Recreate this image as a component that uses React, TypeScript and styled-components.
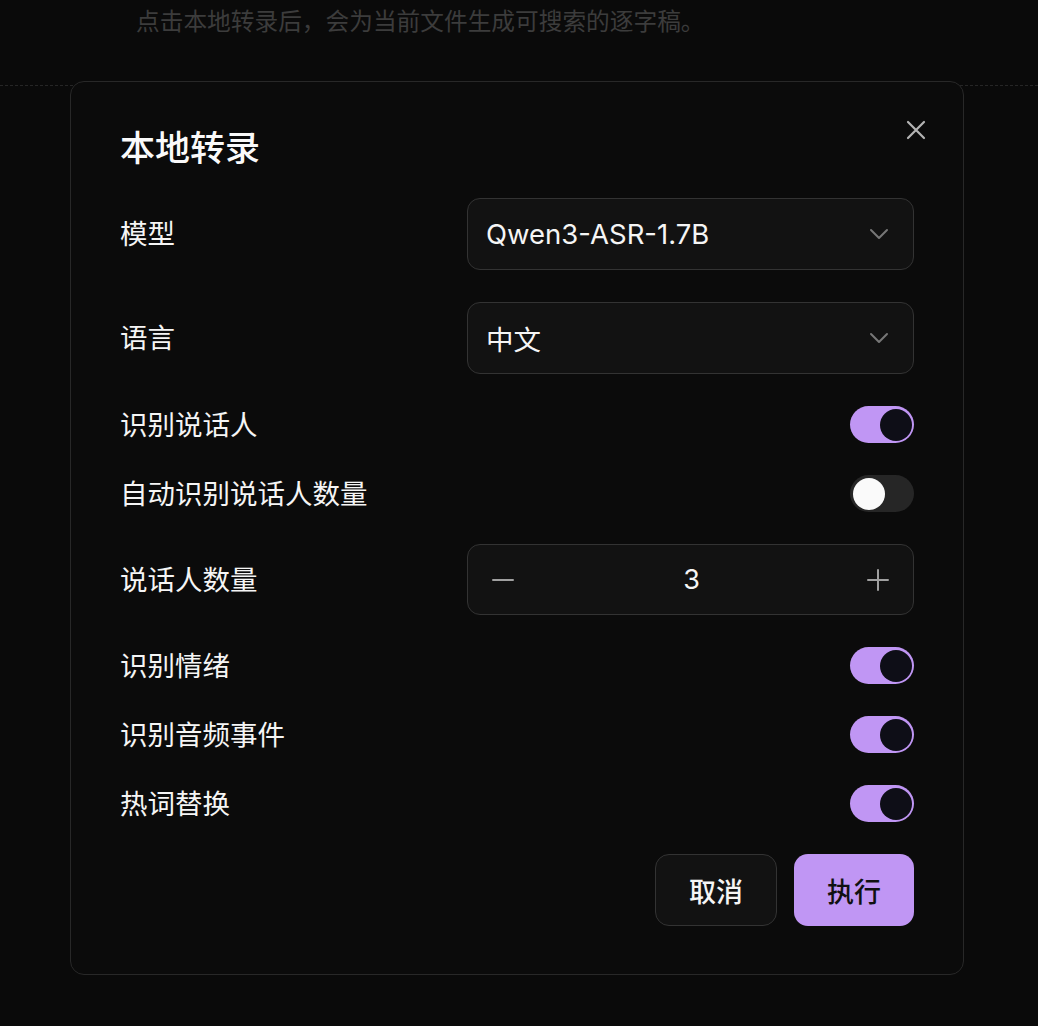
import React from "react";
import styled, { createGlobalStyle } from "styled-components";

const Global = createGlobalStyle`
  html, body { margin: 0; padding: 0; background: #0a0a0a; }
  body { font-family: Inter, "Noto Sans CJK SC", sans-serif; color: #f5f5f5; }
  * { box-sizing: border-box; }
`;

const Page = styled.div`
  position: relative;
  width: 1038px;
  height: 1026px;
  overflow: hidden;
  background: #0a0a0a;
`;

const Header = styled.div`
  height: 86px;
  padding: 8px 0 0 136px;
  border-bottom: 1px dashed #262626;
  font-size: 23.7px;
  line-height: 28px;
  color: #3c3c3c;
`;

const Dialog = styled.div`
  position: absolute;
  top: 81px;
  left: 70px;
  width: 894px;
  height: 894px;
  background: #0b0b0b;
  border: 1px solid #282828;
  border-radius: 14px;
  padding: 49px 49px 47px;
  display: flex;
  flex-direction: column;
  gap: 32px;
`;

const Title = styled.h2`
  margin: 0;
  font-size: 35px;
  line-height: 35px;
  font-weight: 500;
  color: #fafafa;
`;

const Close = styled.button`
  position: absolute;
  top: 36px;
  right: 35px;
  width: 24px;
  height: 24px;
  padding: 0;
  border: none;
  background: none;
  display: flex;
  align-items: center;
  justify-content: center;
`;

const Row = styled.div<{ $h: number }>`
  display: grid;
  grid-template-columns: 1fr 447px;
  align-items: center;
  height: ${(p) => p.$h}px;
`;

const Label = styled.div`
  font-size: 27.5px;
  line-height: 32px;
  color: #f5f5f5;
  font-weight: 400;
`;

const Field = styled.div<{ $h: number }>`
  height: ${(p) => p.$h}px;
  border: 1px solid #333333;
  border-radius: 13px;
  background: #121212;
  display: flex;
  align-items: center;
  justify-content: space-between;
  padding: 0 24px 0 18px;
  font-size: 27.5px;
  color: #f5f5f5;
`;

const Stepper = styled(Field)`
  padding: 0 24px 0 24px;
`;

const StepValue = styled.span`
  font-size: 27px;
  margin-left: 2px;
`;

const Track = styled.div<{ $on: boolean }>`
  justify-self: end;
  width: 64px;
  height: 37px;
  border-radius: 19px;
  background: ${(p) => (p.$on ? "#c096f4" : "#262626")};
  padding: 2.5px;
  display: flex;
  justify-content: ${(p) => (p.$on ? "flex-end" : "flex-start")};
`;

const Knob = styled.div<{ $on: boolean }>`
  width: 32px;
  height: 32px;
  border-radius: 50%;
  background: ${(p) => (p.$on ? "#0e0e17" : "#fafafa")};
`;

const Actions = styled.div`
  display: flex;
  justify-content: flex-end;
  gap: 17px;
`;

const Button = styled.button<{ $primary?: boolean }>`
  height: 72px;
  min-width: ${(p) => (p.$primary ? 120 : 122)}px;
  padding: 0 32px;
  border-radius: 14px;
  font-family: Inter, "Noto Sans CJK SC", sans-serif;
  font-size: 27px;
  font-weight: 500;
  border: ${(p) => (p.$primary ? "none" : "1px solid #333333")};
  background: ${(p) => (p.$primary ? "#c096f4" : "#121212")};
  color: ${(p) => (p.$primary ? "#111111" : "#f5f5f5")};
`;

const Chevron = () => (
  <svg width="20" height="12" viewBox="0 0 20 12" fill="none">
    <path d="M2 2l8 8 8-8" stroke="#777777" strokeWidth="2" strokeLinecap="round" strokeLinejoin="round" />
  </svg>
);

const Minus = () => (
  <svg width="22" height="22" viewBox="0 0 22 22" fill="none">
    <path d="M1 11h20" stroke="#a0a0a0" strokeWidth="2" strokeLinecap="round" />
  </svg>
);

const Plus = () => (
  <svg width="22" height="22" viewBox="0 0 22 22" fill="none">
    <path d="M1 11h20M11 1v20" stroke="#a0a0a0" strokeWidth="2" strokeLinecap="round" />
  </svg>
);

const Switch = ({ on }: { on: boolean }) => (
  <Track $on={on}>
    <Knob $on={on} />
  </Track>
);

const toggles1 = [
  { label: "识别说话人", on: true },
  { label: "自动识别说话人数量", on: false },
];
const toggles2 = [
  { label: "识别情绪", on: true },
  { label: "识别音频事件", on: true },
  { label: "热词替换", on: true },
];

export default function App() {
  return (
    <Page>
      <Global />
      <Header>点击本地转录后，会为当前文件生成可搜索的逐字稿。</Header>
      <Dialog>
        <Title>本地转录</Title>
        <Row $h={72}>
          <Label>模型</Label>
          <Field $h={72}>
            <span>Qwen3-ASR-1.7B</span>
            <Chevron />
          </Field>
        </Row>
        <Row $h={72}>
          <Label>语言</Label>
          <Field $h={72}>
            <span>中文</span>
            <Chevron />
          </Field>
        </Row>
        {toggles1.map((t) => (
          <Row $h={37} key={t.label}>
            <Label>{t.label}</Label>
            <Switch on={t.on} />
          </Row>
        ))}
        <Row $h={71}>
          <Label>说话人数量</Label>
          <Stepper $h={71}>
            <Minus />
            <StepValue>3</StepValue>
            <Plus />
          </Stepper>
        </Row>
        {toggles2.map((t) => (
          <Row $h={37} key={t.label}>
            <Label>{t.label}</Label>
            <Switch on={t.on} />
          </Row>
        ))}
        <Actions>
          <Button>取消</Button>
          <Button $primary>执行</Button>
        </Actions>
        <Close aria-label="关闭">
          <svg width="20" height="20" viewBox="0 0 20 20" fill="none">
            <path d="M2 2l16 16M18 2L2 18" stroke="#b4b4b4" strokeWidth="2.2" strokeLinecap="round" />
          </svg>
        </Close>
      </Dialog>
    </Page>
  );
}
